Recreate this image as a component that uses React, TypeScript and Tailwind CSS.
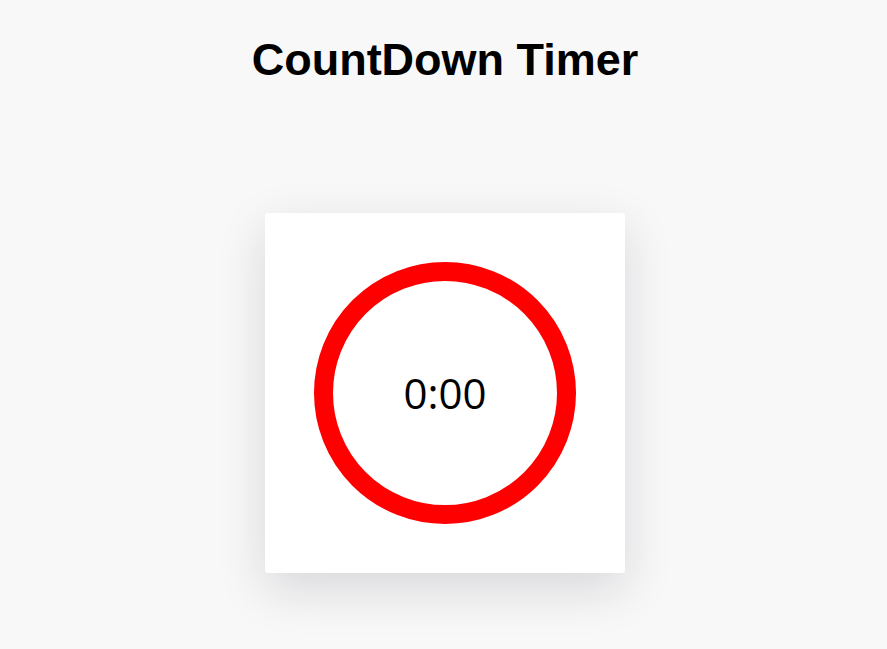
import React from 'react';

const CountdownRing: React.FC<{ label: string }> = ({ label }) => (
  <div className="relative w-[262px] h-[262px]">
    <svg width="262" height="262" viewBox="0 0 262 262" className="block">
      <circle cx="131" cy="131" r="121.5" fill="none" stroke="#ff0000" strokeWidth="19" />
    </svg>
    <div className="absolute inset-0 flex items-center justify-center">
      <span className="text-[42px] leading-none text-black font-['Open_Sans','Noto_Sans',sans-serif]">{label}</span>
    </div>
  </div>
);

export default function App() {
  return (
    <div className="min-h-[649px] bg-[#f8f8f8] flex flex-col items-center font-['Liberation_Sans',Arial,sans-serif]">
      <h1 className="mt-[35px] ml-[3px] text-[45px] leading-[50px] font-bold text-black">CountDown Timer</h1>
      <div className="mt-[128px] ml-[3px] w-[360px] h-[360px] bg-white rounded-[3px] shadow-[0_16px_50px_rgba(20,20,50,0.14)] flex items-center justify-center">
        <CountdownRing label="0:00" />
      </div>
    </div>
  );
}
